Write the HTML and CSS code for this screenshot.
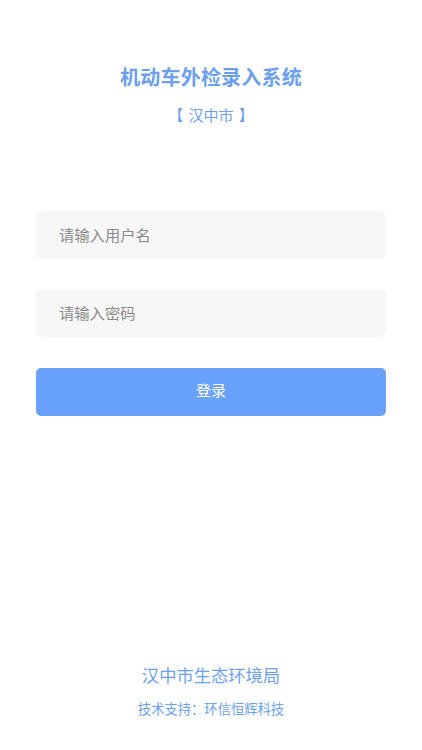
FILE: index.html
```html
<!DOCTYPE html>
<html lang="zh">
<head>
<meta charset="utf-8">
<title>机动车外检录入系统</title>
<link rel="stylesheet" href="styles.css">
</head>
<body>
<div class="page">
  <header class="head">
    <h1 class="title">机动车外检录入系统</h1>
    <div class="city">【 汉中市 】</div>
  </header>
  <form class="form">
    <input class="field" type="text" placeholder="请输入用户名">
    <input class="field" type="password" placeholder="请输入密码">
    <button class="btn" type="button">登录</button>
  </form>
  <footer class="foot">
    <div class="org">汉中市生态环境局</div>
    <div class="support">技术支持：环信恒辉科技</div>
  </footer>
</div>
</body>
</html>
```

FILE: styles.css
```css
* { box-sizing: border-box; }
html, body { margin: 0; padding: 0; background: #fff; }
body {
  font-family: "Noto Sans CJK SC", "Noto Sans", sans-serif;
  width: 422px;
  height: 750px;
  overflow: hidden;
}
.page {
  height: 750px;
  display: flex;
  flex-direction: column;
  padding: 0 36px;
}
.head {
  display: flex;
  flex-direction: column;
  align-items: center;
  padding-top: 62px;
}
.title {
  margin: 0;
  font-size: 20px;
  line-height: 30px;
  font-weight: 700;
  color: #6c9ff0;
  letter-spacing: 0.2px;
}
.city {
  margin-top: 12px;
  font-size: 15px;
  line-height: 22px;
  color: #6c9ff0;
  word-spacing: 2px;
}
.form {
  display: flex;
  flex-direction: column;
  gap: 30px;
  margin-top: 85px;
}
.field {
  height: 48px;
  border: none;
  border-radius: 6px;
  background: #f7f7f7;
  padding: 0 23px 3px;
  font-family: inherit;
  font-size: 15.3px;
  color: #333;
  outline: none;
}
.field::placeholder { color: #8a8a8a; }
.btn {
  height: 48px;
  border: none;
  border-radius: 5px;
  background: #68a2fc;
  color: #fff;
  font-family: inherit;
  font-size: 15px;
  margin-top: 1px;
  padding: 0 0 5px;
}
.foot {
  margin-top: auto;
  padding-bottom: 32px;
  display: flex;
  flex-direction: column;
  align-items: center;
  color: #6c9ff0;
}
.org {
  font-size: 17.3px;
  line-height: 26px;
}
.support {
  margin-top: 12px;
  font-size: 13.3px;
  line-height: 18px;
}
```
